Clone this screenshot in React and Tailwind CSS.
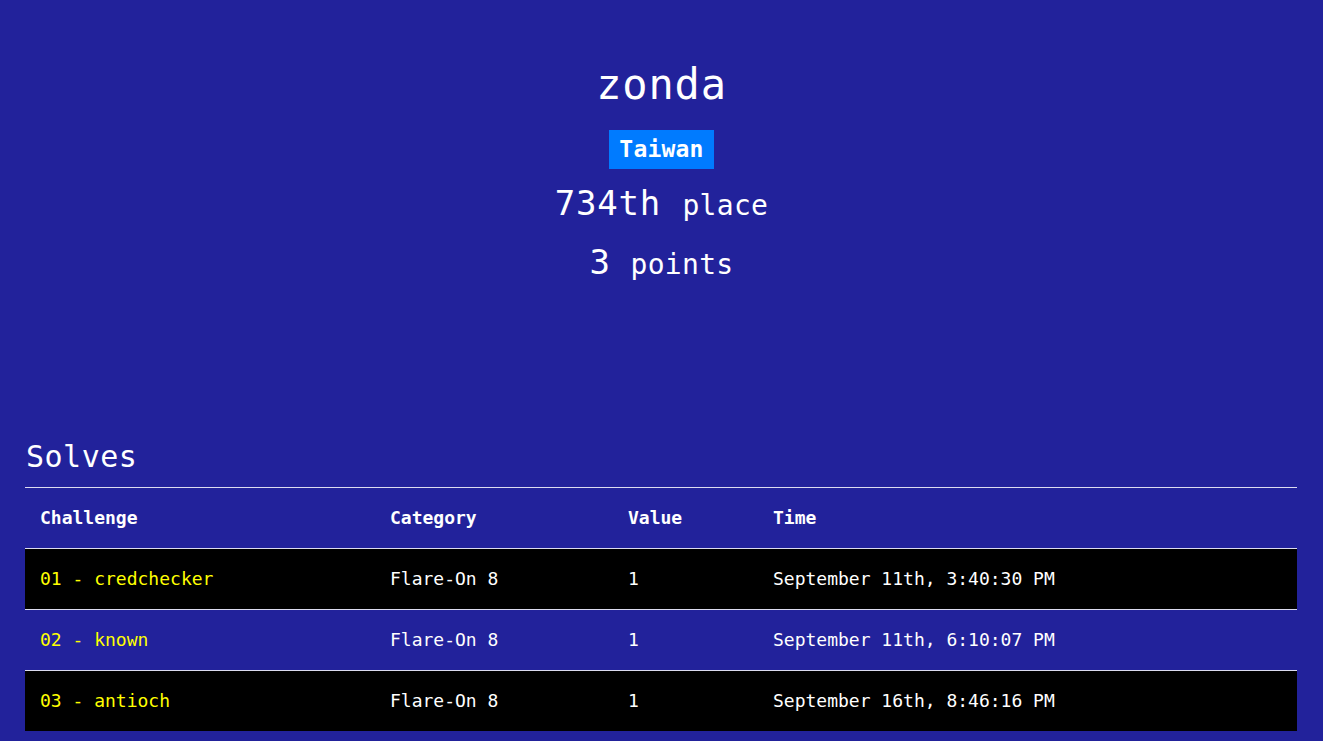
import React from 'react'

const solves = [
  { name: '01 - credchecker', category: 'Flare-On 8', value: 1, time: 'September 11th, 3:40:30 PM' },
  { name: '02 - known', category: 'Flare-On 8', value: 1, time: 'September 11th, 6:10:07 PM' },
  { name: '03 - antioch', category: 'Flare-On 8', value: 1, time: 'September 16th, 8:46:16 PM' },
]

const mono = { fontFamily: "'DejaVu Sans Mono', 'Liberation Mono', monospace" }

export default function App() {
  return (
    <div className="min-h-[741px] bg-[#22229b] text-white" style={mono}>
      {/* Profile header */}
      <div className="flex flex-col items-center pt-[57px]">
        <h1 className="text-[42px] leading-[56px] tracking-[0.8px]">zonda</h1>
        <span className="mt-[17px] bg-[#007bff] px-[10px] h-[39px] flex items-center text-[23px] font-bold tracking-[0.2px]">Taiwan</span>
        <h2 className="mt-[11px] text-[34px] leading-[46px] tracking-[0.8px]">
          734th <span className="text-[28px] tracking-[0.3px]">place</span>
        </h2>
        <h2 className="mt-[10px] text-[34px] leading-[46px]">
          3 <span className="text-[28px] tracking-[0.3px]">points</span>
        </h2>
      </div>

      {/* Solves */}
      <div className="pl-[25px] pr-[26px] pt-[149px]">
        <h3 className="text-[30px] leading-[40px] pl-[1px] tracking-[0.5px]">Solves</h3>
        <div className="mt-[10px] border-t border-[#dcdcf0]">
          <div className="grid grid-cols-[350px_238px_145px_1fr] h-[60px] items-center font-bold text-[18px] pb-[2px]">
            <div className="pl-[15px]">Challenge</div>
            <div className="pl-[15px]">Category</div>
            <div className="pl-[15px]">Value</div>
            <div className="pl-[15px]">Time</div>
          </div>
          {solves.map((s, i) => (
            <div
              key={s.name}
              className={`grid grid-cols-[350px_238px_145px_1fr] h-[61px] items-center border-t border-[#dcdcf0] text-[18px] pb-[2px] ${
                i % 2 === 0 ? 'bg-black' : 'bg-[#22229b]'
              }`}
            >
              <div className="pl-[15px] text-[#ffff00]">{s.name}</div>
              <div className="pl-[15px]">{s.category}</div>
              <div className="pl-[15px]">{s.value}</div>
              <div className="pl-[15px]">{s.time}</div>
            </div>
          ))}
        </div>
      </div>
    </div>
  )
}
